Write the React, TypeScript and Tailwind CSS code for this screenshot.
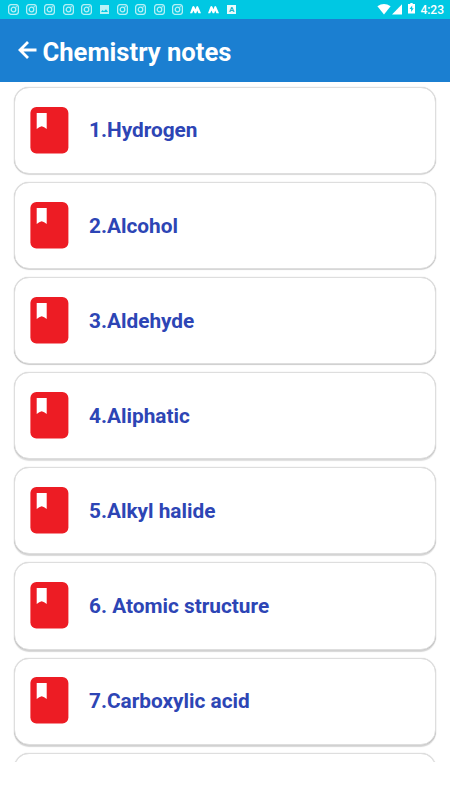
import React from "react";

const chapters = [
  { title: "1.Hydrogen", shadow: "shadow-[0_1px_1px_rgba(0,0,0,0.13),0_0_1px_rgba(0,0,0,0.25)]" },
  { title: "2.Alcohol", shadow: "shadow-[0_1px_1px_rgba(0,0,0,0.15),0_0_1px_rgba(0,0,0,0.25)]" },
  { title: "3.Aldehyde", shadow: "shadow-[0_1px_1px_rgba(0,0,0,0.18),0_0_1px_rgba(0,0,0,0.25)]" },
  { title: "4.Aliphatic", shadow: "shadow-[0_2px_1px_rgba(0,0,0,0.13),0_0_1px_rgba(0,0,0,0.25)]" },
  { title: "5.Alkyl halide", shadow: "shadow-[0_2px_1px_rgba(0,0,0,0.15),0_0_1px_rgba(0,0,0,0.25)]" },
  { title: "6. Atomic structure", shadow: "shadow-[0_2px_1px_rgba(0,0,0,0.16),0_0_1px_rgba(0,0,0,0.25)]" },
  { title: "7.Carboxylic acid", shadow: "shadow-[0_2px_1px_rgba(0,0,0,0.16),0_0_1px_rgba(0,0,0,0.25)]" },
  { title: "", shadow: "shadow-[0_2px_1px_rgba(0,0,0,0.16),0_0_1px_rgba(0,0,0,0.25)]" },
];

const notifications = [
  "camera",
  "camera",
  "camera",
  "camera",
  "camera",
  "image",
  "camera",
  "camera",
  "camera",
  "camera",
  "wave",
  "wave",
  "letter",
];

const NotificationIcon = ({ type }: { type: string }) => {
  if (type === "image") {
    return (
      <svg className="w-[11px] h-[11px]" viewBox="0 0 11 11">
        <path fill="#b9f1f6" d="M1 1h9v9H1zM2 8h7L7 5.2 5 7.2 3.6 6z" fillRule="evenodd" />
      </svg>
    );
  }
  if (type === "wave") {
    return (
      <svg className="w-[11px] h-[11px]" viewBox="0 0 11 11">
        <path
          fill="#fff"
          d="M0 9.2 2.4 2.8Q3.3 1.3 4.4 2.8L5.6 5.2 6.3 3Q7.1 1.3 8.2 2.8L11 9.2H8.4L7.2 6.4 6.3 9.2H4.7L3.4 6.4 2.2 9.2z"
        />
      </svg>
    );
  }
  if (type === "letter") {
    return (
      <div className="flex items-center justify-center w-[9px] h-[9px] mx-px bg-[#e8fbfc] text-[8px] leading-none font-bold text-[#20b4c6]">
        A
      </div>
    );
  }
  return (
    <svg
      className="w-[11px] h-[11px]"
      viewBox="0 0 11 11"
      fill="none"
      stroke="#b5f0f6"
      strokeWidth="1.3"
    >
      <rect x="0.6" y="0.6" width="9.8" height="9.8" rx="2.7" />
      <circle cx="5.5" cy="5.5" r="2.3" />
      <circle cx="8.2" cy="2.8" r="0.7" fill="#b5f0f6" stroke="none" />
    </svg>
  );
};

const StatusBar = () => (
  <div className="flex items-start justify-between h-[19px] bg-[#00c8e3] pl-2 pr-[6px] pt-1">
    <div className="flex items-center gap-[7.2px] h-[11px]">
      {notifications.map((type, i) => (
        <NotificationIcon key={i} type={type} />
      ))}
    </div>
    <div className="flex items-center h-[11px]">
      <svg className="w-[14px] h-[11px]" viewBox="0 0 14 11" fill="#fff">
        <path d="M.4 2.2Q7-2 13.6 2.2L7 10.6z" />
      </svg>
      <svg className="w-[10px] h-[11px] ml-px" viewBox="0 0 10 11" fill="#fff">
        <path d="M10 .2V10.6H0z" />
      </svg>
      <svg className="w-[7px] h-[11px] ml-[6px] -mt-[2px]" viewBox="0 0 7 11">
        <path fill="#fff" d="M2.3 0h2.4v1H7v9.5H0V1h2.3z" />
        <path fill="#00c8e3" d="M4.2 2.4 1.5 6h1.6v3L5.7 5.3H4.2z" />
      </svg>
      <span className="mt-px ml-[5px] text-[12px] leading-[11px] font-medium text-white">
        4:23
      </span>
    </div>
  </div>
);

const BookIcon = () => (
  <svg className="w-[39px] h-[47px] -mt-px" viewBox="0 0 39 47">
    <rect x="0.4" width="38" height="46.5" rx="6" fill="#ed1c24" />
    <path fill="#fff" d="M6.7 6h10v16Q14.2 20 11.7 19.3 9.2 20 6.7 22z" />
  </svg>
);

const App = () => {
  return (
    <div className="h-[800px] overflow-hidden bg-white font-[Roboto,sans-serif]">
      <StatusBar />
      <header className="flex items-center h-[63px] pl-[18px] bg-[#1b7fd1]">
        <svg
          className="w-[19px] h-[18px] -mt-[2px]"
          viewBox="0 0 19 18"
          fill="none"
          stroke="#fff"
          strokeWidth="2.8"
        >
          <path d="M18.5 9H2.5M10 1 2 9l8 8" />
        </svg>
        <h1 className="mt-[4px] ml-[5.5px] text-[25.6px] font-bold leading-none text-white whitespace-nowrap">
          Chemistry notes
        </h1>
      </header>
      <ul className="flex flex-col gap-2 h-[680px] pt-[5px] px-[14px] overflow-hidden">
        {chapters.map(({ title, shadow }, i) => (
          <li
            key={i}
            className={`flex items-center shrink-0 h-[87.1px] pl-[15px] bg-white border border-[#dedede] rounded-[15px] ${shadow}`}
          >
            <BookIcon />
            <span className="mt-px ml-[20px] text-[20.8px] font-bold text-[#2d45b5] whitespace-nowrap">
              {title}
            </span>
          </li>
        ))}
      </ul>
    </div>
  );
};

export default App;
